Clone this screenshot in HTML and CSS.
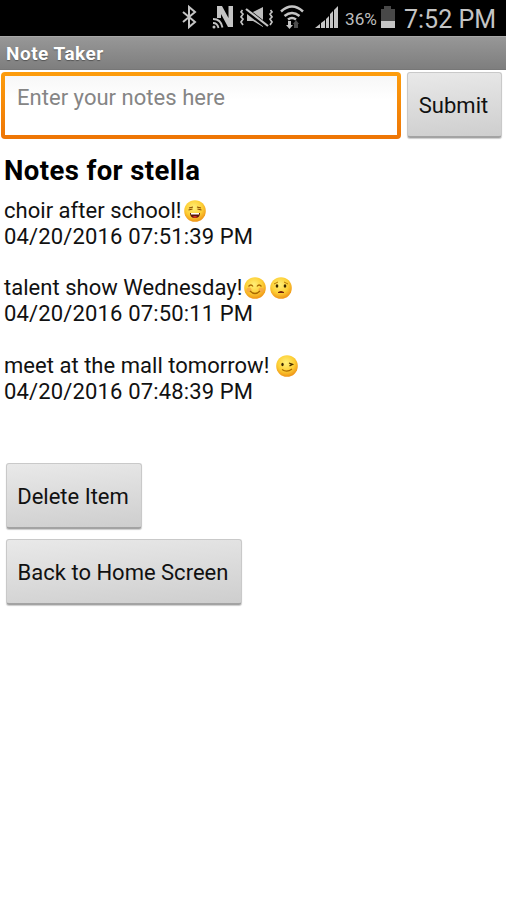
FILE: index.html
```html
<!DOCTYPE html>
<html lang="en">
<head>
<meta charset="utf-8">
<title>Note Taker</title>
<link rel="stylesheet" href="styles.css">
</head>
<body>
<header class="status">
  <svg class="status-icons" width="222" height="36" viewBox="180 0 222 36">
    <g fill="none" stroke="#c4c4c4" stroke-width="2">
      <path d="M183 12l12 10-6 5V7l6 5-12 10"/>
      <path d="M242.500 10l-1.500 2 2 2-2 3 2 2-2 3 2 3M270.500 10l1.500 2-2 2 2 3-2 2 2 3-2 3" stroke-width="1.700"/>
      <path d="M281 11.500q11-10 22 0M284.500 16q7.500-6 15 0M288 19.500q4-3 8 0" stroke-width="2.500"/>
      <path d="M213 19q8 0 9.500 8.500M213 23q4.500 0 5.500 5" stroke-width="1.800"/>
    </g>
    <path d="M217 18V6h5l6.500 12V6h4.500v21h-5L221 14v4z" fill="#c4c4c4"/>
    <circle cx="214" cy="27" r="1.500" fill="#c4c4c4"/>
    <path d="M247 12h6l10-5v20l-10-6h-6z" fill="#bdbdbd"/>
    <path d="M246 10l22 17" stroke="#000" stroke-width="5"/>
    <path d="M246 9l22 17" stroke="#c4c4c4" stroke-width="2.200"/>
    <path d="M288 21h3v4h2l-3.500 4-3.500-4h2z" fill="#c4c4c4"/>
    <path d="M294 28v-4h-1l3-4 3 4h-1v4z" fill="#4d4d4d"/>
    <path d="M315 28l5-4v4zM321 23l4-3v8h-4zM326 19l3-3v12h-3zM330 14l3-3v17h-3zM334 10l4-4v22h-4z" fill="#c4c4c4"/>
    <text class="battery-text" x="345" y="25" textLength="32" lengthAdjust="spacingAndGlyphs">36%</text>
    <path d="M381 9h3V6h7v3h4v12h-14z" fill="#484848"/>
    <path d="M381 21h14v7h-14z" fill="#c4c4c4"/>
  </svg>
  <span class="clock">7:52 PM</span>
</header>
<div class="titlebar">Note Taker</div>
<main>
  <div class="entry">
    <div class="field"><span class="placeholder">Enter your notes here</span></div>
    <button class="button submit">Submit</button>
  </div>
  <h1 class="heading">Notes for stella</h1>
  <div class="notes">
    <div class="note">
      <div class="line"><span class="text">choir after school!</span><svg class="emoji" viewBox="0 0 22 22"><use href="#face"/><path d="M5 8l4-1M13 7l4 1M4.500 10l4-1M13.500 9l4 1" stroke="#8a4b00" stroke-width="1.200"/><path d="M6 13h10q0 5-5 5t-5-5z" fill="#5a1608"/><path d="M7 13h8v1.500H7z" fill="#fff"/><path d="M8.500 17q2.500-2 5 0-2.500 1.500-5 0z" fill="#e8332a"/></svg></div>
      <div class="line date">04/20/2016 07:51:39 PM</div>
    </div>
    <div class="note">
      <div class="line"><span class="text">talent show Wednesday!</span><svg class="emoji" viewBox="0 0 22 22"><use href="#face"/><circle cx="5" cy="13" r="2.500" fill="#f5a04a" opacity=".7"/><circle cx="17" cy="13" r="2.500" fill="#f5a04a" opacity=".7"/><path d="M4.500 9.500q2.500-3 4.500 0M13 9.500q2-3 4.500 0M6 14q5 5 10 0" fill="none" stroke="#a86800" stroke-width="1.300"/></svg><svg class="emoji second" viewBox="0 0 22 22"><use href="#face"/><path d="M4 7l4-2M14 5l4 2" stroke="#b87800"/><ellipse cx="7" cy="9" rx="1.300" ry="1.800" fill="#382400"/><ellipse cx="15" cy="9" rx="1.300" ry="1.800" fill="#382400"/><path d="M8 15.500q3-2 6 0z" fill="#74210c" stroke="#74210c"/></svg></div>
      <div class="line date">04/20/2016 07:50:11 PM</div>
    </div>
    <div class="note">
      <div class="line"><span class="text">meet at the mall tomorrow!</span><svg class="emoji spaced" viewBox="0 0 22 22"><use href="#face"/><ellipse cx="6.500" cy="9.500" rx="1.200" ry="1.700" fill="#382400"/><path d="M13 8l3.500 1.300-3 1.500" fill="none" stroke="#4b3000" stroke-width="1.300"/><path d="M6 14.500q5 3.500 10-.5" fill="none" stroke="#a86800" stroke-width="1.200"/></svg></div>
      <div class="line date">04/20/2016 07:48:39 PM</div>
    </div>
  </div>
  <div class="actions">
    <button class="button delete">Delete Item</button>
    <button class="button home">Back to Home Screen</button>
  </div>
</main>
<svg class="defs" width="0" height="0"><defs>
  <radialGradient id="skin" cx=".45" cy=".35" r=".65"><stop offset="0" stop-color="#fff07a"/><stop offset=".6" stop-color="#fdcf35"/><stop offset="1" stop-color="#ef9416"/></radialGradient>
  <circle id="face" cx="11" cy="11" r="10.800" fill="url(#skin)"/>
</defs></svg>
</body>
</html>
```
FILE: styles.css
```css
* { box-sizing: border-box; }
body {
  margin: 0;
  height: 900px;
  overflow: hidden;
  background: #fff;
  color: #111;
  font: 22px/25.8px Roboto, sans-serif;
}
.status {
  height: 36px;
  display: flex;
  justify-content: flex-end;
  background: #000;
  color: #c4c4c4;
  padding-right: 10px;
}
.status-icons { flex: none; margin-right: 2px; }
.battery-text { font-size: 17px; fill: #bdbdbd; }
.clock { width: 92px; font-size: 25px; line-height: 39px; white-space: nowrap; }
.titlebar {
  height: 34px;
  padding-left: 6px;
  border-top: 1px solid #a8a8a8;
  border-bottom: 1px solid #777;
  background: linear-gradient(#979797, #7e7e7e);
  color: #fff;
  font-size: 19px;
  font-weight: 700;
  line-height: 34px;
  letter-spacing: .5px;
  text-shadow: 0 1px 1px #555;
}
.entry { display: flex; padding: 2px 4px 0 1px; }
.field {
  width: 400px;
  height: 67px;
  border-radius: 4px;
  padding: 4px;
  background: linear-gradient(#fd9d0c, #ee7505);
}
.placeholder {
  display: block;
  height: 59px;
  padding: 9px 12px;
  background: linear-gradient(#f7f7f7, #fff 24px);
  color: #858585;
  letter-spacing: .03px;
}
.button {
  height: 66px;
  border: 1px solid #c9c9c9;
  border-bottom: 2px solid #a3a3a3;
  border-radius: 3px;
  padding: 2px 2px 0 0;
  background: linear-gradient(175deg, #e9e9e9, #cecece);
  color: #111;
  font: 22px/26px Roboto, sans-serif;
  white-space: nowrap;
  box-shadow: 0 1px 1px #ccc;
}
.submit { width: 95px; margin-left: 6px; }
.heading { margin: 16px 0 0 4px; font-size: 27.5px; line-height: 32px; letter-spacing: .4px; color: #000; }
.notes { margin: 11px 0 0 4px; }
.note { margin-bottom: 25.8px; }
.line { height: 25.8px; display: flex; white-space: nowrap; letter-spacing: .03px; }
.date { letter-spacing: .15px; }
.emoji { width: 22px; height: 22px; margin: 2px 0 0 2px; flex: none; }
.second { margin-left: 4px; }
.spaced { margin-left: 7px; }
.actions { display: flex; flex-direction: column; align-items: flex-start; gap: 10px; margin: 59px 0 0 6px; }
.delete { width: 136px; }
.home { width: 236px; }
.defs { position: absolute; }
```
